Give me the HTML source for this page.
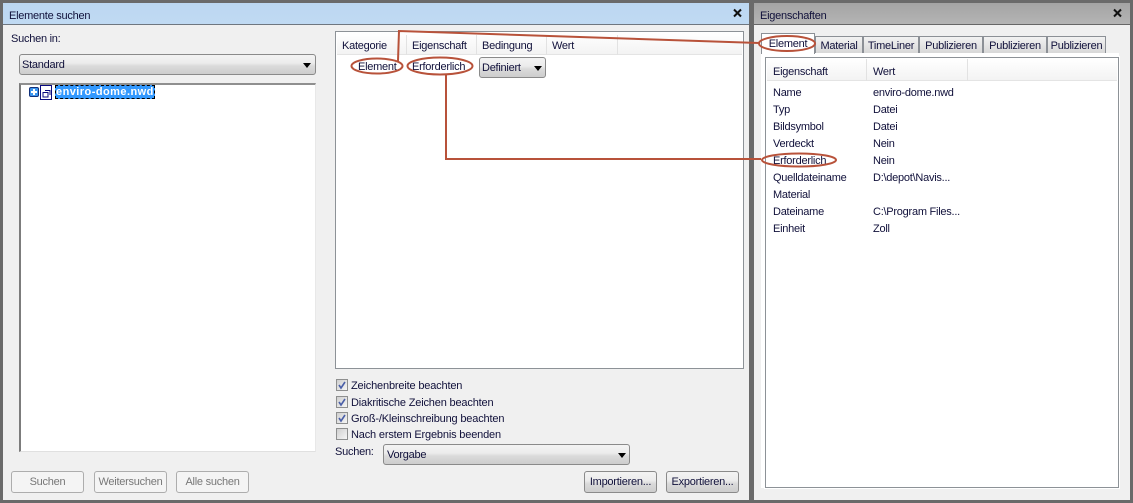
<!DOCTYPE html>
<html><head><meta charset="utf-8">
<style>
html,body{margin:0;padding:0;}
body{width:1133px;height:503px;position:relative;overflow:hidden;background:#6a6a6a;font:11px "Liberation Sans",sans-serif;letter-spacing:-.25px;color:#10103a;}
div,span{position:absolute;box-sizing:border-box;white-space:nowrap;}
.t{line-height:14px;height:14px;margin-top:1px;}
.c{letter-spacing:-.17px;}
.btn{border:1px solid #8a8a8a;border-radius:3px;background:linear-gradient(#f3f3f3 0,#ececec 42%,#dadada 58%,#cdcdcd 100%);text-align:center;line-height:21px;color:#10103a;}
.dis{border:1px solid #adadad;background:#f4f4f4;color:#777;}
.arr{width:0;height:0;border-left:4px solid transparent;border-right:4px solid transparent;border-top:5px solid #000;}
.cb{width:12px;height:12px;border:1px solid #8e8f8f;background:linear-gradient(135deg,#cfcfcf,#f6f6f6);}
.tab{height:17px;border:1px solid #8c9096;border-bottom:0;background:linear-gradient(#f2f2f2,#d8d8d8);text-align:center;line-height:18px;color:#10103a;}
.hs{width:1px;background:#e2e2e2;}
</style></head><body>
<!-- left panel -->
<div style="left:3px;top:3px;width:746px;height:497px;background:#f0f0f0;"></div>
<div style="left:3px;top:3px;width:746px;height:22px;background:linear-gradient(#bcd7f1,#c0daf3);border-bottom:1px solid #6f7780;"></div>
<div class="t" style="left:9px;top:8px;">Elemente suchen</div>
<svg style="position:absolute;left:733px;top:8px" width="10" height="10"><path d="M1 1.5L8 8.500M8 1.5L1 8.500" stroke="#111" stroke-width="2"/></svg>
<div class="t" style="left:11px;top:31px;">Suchen in:</div>
<div class="btn" style="left:19px;top:54px;width:297px;height:21px;text-align:left;padding-left:2px;">Standard</div>
<div class="arr" style="left:303px;top:63px;"></div>
<div style="left:19px;top:83px;width:297px;height:369px;background:#fff;border-top:2px solid #8f8f8f;border-left:2px solid #7c7c7c;border-right:1px solid #e8e8e8;border-bottom:1px solid #e0e0e0;"></div>
<div style="left:29px;top:87px;width:10px;height:10px;background:#3d96ee;border:1px solid #10307a;border-radius:2px;"></div>
<div style="left:31px;top:91px;width:6px;height:2px;background:#fff;"></div>
<div style="left:33px;top:89px;width:2px;height:6px;background:#fff;"></div>
<svg style="position:absolute;left:40px;top:85px" width="12" height="15"><path d="M.5.5H11.5V14.5H.5Z" fill="#fff" stroke="#0a0a80"/><path d="M3 7.5H8V12H3ZM5 5.5H10V10" fill="none" stroke="#0a0a80"/></svg>
<div style="left:55px;top:85px;width:100px;height:14px;background:#3399ff;outline:1px dashed #000;outline-offset:-1px;color:#fff;font-weight:bold;line-height:15px;padding-left:1px;letter-spacing:.45px;">enviro-dome.nwd</div>
<div class="btn dis" style="left:11px;top:471px;width:73px;height:22px;">Suchen</div>
<div class="btn dis" style="left:94px;top:471px;width:73px;height:22px;">Weitersuchen</div>
<div class="btn dis" style="left:176px;top:471px;width:73px;height:22px;">Alle suchen</div>
<!-- list -->
<div style="left:335px;top:31px;width:409px;height:338px;background:#fff;border:1px solid #8d9297;"></div>
<div style="left:337px;top:33px;width:405px;height:22px;background:linear-gradient(#fff,#f3f3f3);border-bottom:1px solid #e4e4e4;"></div>
<div class="hs" style="left:406px;top:35px;height:20px;"></div>
<div class="hs" style="left:476px;top:35px;height:20px;"></div>
<div class="hs" style="left:546px;top:35px;height:20px;"></div>
<div class="hs" style="left:617px;top:35px;height:20px;"></div>
<div class="t" style="left:342px;top:38px;">Kategorie</div>
<div class="t" style="left:412px;top:38px;">Eigenschaft</div>
<div class="t" style="left:482px;top:38px;">Bedingung</div>
<div class="t" style="left:552px;top:38px;">Wert</div>
<div class="t" style="left:358px;top:59px;">Element</div>
<div class="t" style="left:412px;top:59px;">Erforderlich</div>
<div class="btn" style="left:479px;top:57px;width:67px;height:21px;text-align:left;padding-left:2px;">Definiert</div>
<div class="arr" style="left:534px;top:66px;"></div>
<!-- checks -->
<div class="cb" style="left:336px;top:379px;"></div>
<div class="cb" style="left:336px;top:396px;"></div>
<div class="cb" style="left:336px;top:412px;"></div>
<div class="cb" style="left:336px;top:428px;"></div>
<svg style="position:absolute;left:336px;top:379px" width="12" height="50" fill="none" stroke="#4a5fa8" stroke-width="1.6"><path d="M3 6L5 9L9 3M3 23L5 26L9 20M3 39L5 42L9 36"/></svg>
<div class="t c" style="left:351px;top:378px;">Zeichenbreite beachten</div>
<div class="t c" style="left:351px;top:395px;">Diakritische Zeichen beachten</div>
<div class="t c" style="left:351px;top:411px;">Groß-/Kleinschreibung beachten</div>
<div class="t c" style="left:351px;top:427px;">Nach erstem Ergebnis beenden</div>
<div class="t" style="left:335px;top:444px;">Suchen:</div>
<div class="btn" style="left:383px;top:444px;width:247px;height:21px;text-align:left;padding-left:3px;">Vorgabe</div>
<div class="arr" style="left:618px;top:453px;"></div>
<div class="btn" style="left:584px;top:471px;width:73px;height:22px;">Importieren...</div>
<div class="btn" style="left:666px;top:471px;width:73px;height:22px;">Exportieren...</div>
<!-- right panel -->
<div style="left:754px;top:3px;width:376px;height:497px;background:#f0f0f0;"></div>
<div style="left:754px;top:3px;width:376px;height:22px;background:linear-gradient(#a4a4a4,#b4b4b4);border-bottom:1px solid #666;"></div>
<div class="t" style="left:760px;top:8px;">Eigenschaften</div>
<svg style="position:absolute;left:1113px;top:8px" width="10" height="10"><path d="M1 1.5L8 8.500M8 1.5L1 8.500" stroke="#111" stroke-width="2"/></svg>
<div style="left:761px;top:53px;width:358px;height:435px;background:#fff;"></div>
<div class="tab" style="left:815px;top:36px;width:48px;">Material</div>
<div class="tab" style="left:863px;top:36px;width:56px;">TimeLiner</div>
<div class="tab" style="left:919px;top:36px;width:64px;">Publizieren</div>
<div class="tab" style="left:983px;top:36px;width:64px;">Publizieren</div>
<div class="tab" style="left:1047px;top:36px;width:59px;">Publizieren</div>
<div class="tab" style="left:761px;top:33px;width:54px;height:21px;background:#fff;line-height:21px;">Element</div>
<div style="left:765px;top:57px;width:354px;height:431px;background:#fff;border:1px solid #8d9297;outline:1px solid #fff;"></div>
<div style="left:767px;top:59px;width:350px;height:22px;background:linear-gradient(#fff,#f3f3f3);border-bottom:1px solid #e4e4e4;"></div>
<div class="hs" style="left:866px;top:59px;height:22px;"></div>
<div class="hs" style="left:967px;top:59px;height:22px;"></div>
<div class="t" style="left:773px;top:64px;">Eigenschaft</div>
<div class="t" style="left:873px;top:64px;">Wert</div>
<div class="t" style="left:773px;top:85px;">Name</div><div class="t" style="left:873px;top:85px;">enviro-dome.nwd</div>
<div class="t" style="left:773px;top:102px;">Typ</div><div class="t" style="left:873px;top:102px;">Datei</div>
<div class="t" style="left:773px;top:119px;">Bildsymbol</div><div class="t" style="left:873px;top:119px;">Datei</div>
<div class="t" style="left:773px;top:136px;">Verdeckt</div><div class="t" style="left:873px;top:136px;">Nein</div>
<div class="t" style="left:773px;top:153px;">Erforderlich</div><div class="t" style="left:873px;top:153px;">Nein</div>
<div class="t" style="left:773px;top:170px;">Quelldateiname</div><div class="t" style="left:873px;top:170px;">D:\depot\Navis...</div>
<div class="t" style="left:773px;top:187px;">Material</div>
<div class="t" style="left:773px;top:204px;">Dateiname</div><div class="t" style="left:873px;top:204px;">C:\Program Files...</div>
<div class="t" style="left:773px;top:221px;">Einheit</div><div class="t" style="left:873px;top:221px;">Zoll</div>
<!-- annotations -->
<svg style="position:absolute;left:0;top:0" width="1133" height="503" fill="none" stroke="#b8523a" stroke-width="2">
<path d="M398 61L399 31L759 43"/>
<path d="M446 75V159H761"/>
<ellipse cx="377" cy="66" rx="25.500" ry="7.500"/>
<ellipse cx="440" cy="66" rx="32.500" ry="8.500"/>
<ellipse cx="787" cy="43.500" rx="28" ry="7.500"/>
<ellipse cx="799" cy="160" rx="37" ry="6.500"/>
</svg>
</body></html>
